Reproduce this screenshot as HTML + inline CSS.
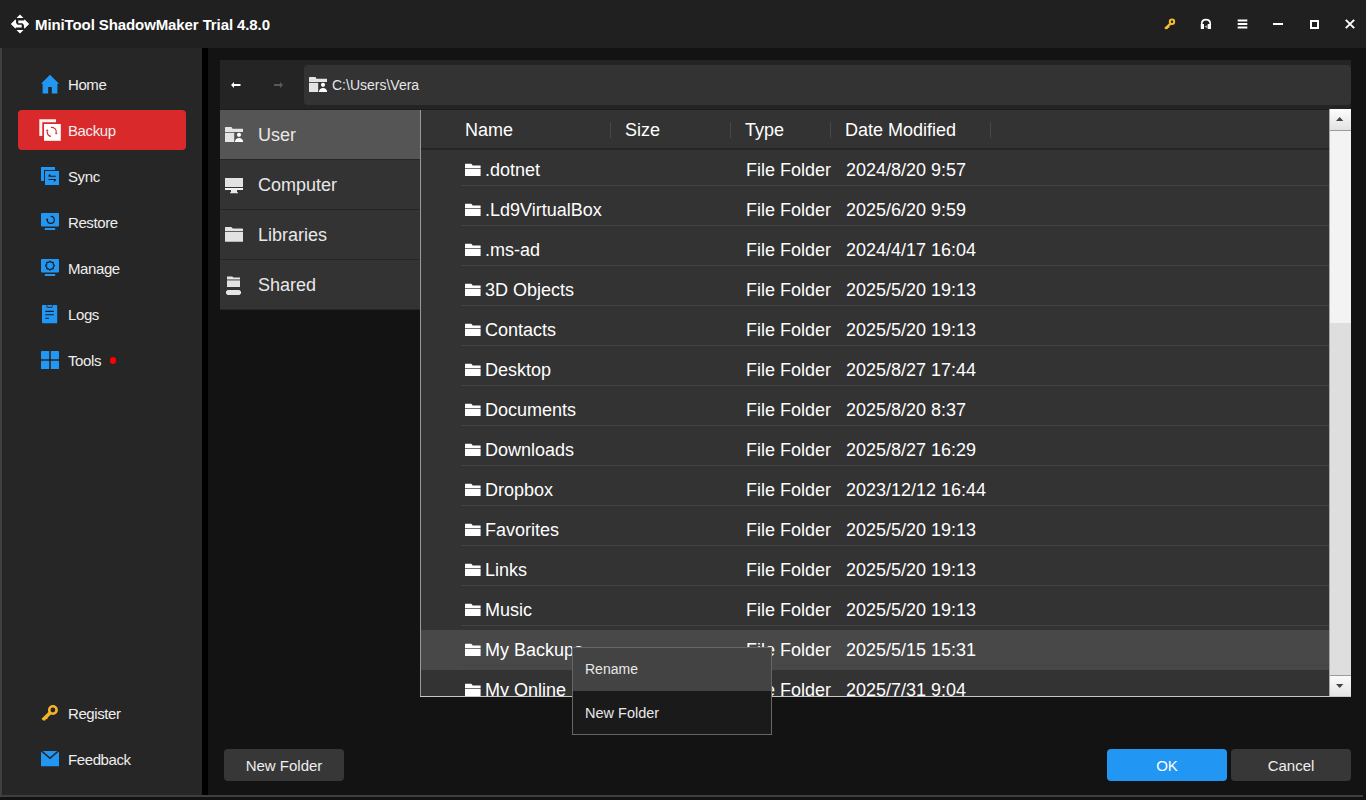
<!DOCTYPE html>
<html><head><meta charset="utf-8"><style>
*{box-sizing:border-box;margin:0;padding:0}
html,body{width:1366px;height:800px;overflow:hidden;background:#131313;font-family:"Liberation Sans",sans-serif;color:#eee}
.a{position:absolute}
svg{display:block}
#title{left:0;top:0;width:1366px;height:48px;background:#202020}
#ttxt{left:35px;top:16px;font-weight:bold;font-size:15px;line-height:18px;color:#fff;white-space:nowrap;letter-spacing:-0.1px}
#side{left:0;top:48px;width:202px;height:749px;background:#262626;border-left:2px solid #404040}
#blk{left:202px;top:48px;width:6px;height:749px;background:#000}
#botline{left:2px;top:795px;width:1361px;height:2px;background:#3e3e3e}
.nav{font-size:15px;line-height:18px;color:#eee;white-space:nowrap;left:68px;letter-spacing:-0.4px}
#navbar{left:220px;top:60px;width:1131px;height:50px;background:#242424}
#addr{left:304px;top:65px;width:1047px;height:40px;background:#333;border-radius:4px}
#addrtxt{left:332px;top:77px;font-size:14px;line-height:16px;color:#e6e6e6;white-space:nowrap}
.pl{left:220px;width:200px;height:50px;background:#333;border-bottom:1px solid #262626}
.pltxt{left:258px;font-size:18px;line-height:20px;color:#e8e8e8;white-space:nowrap}
#lc{left:421px;top:110px;width:908px;height:586px;background:#333;overflow:hidden}
#lborder{left:420px;top:110px;width:1px;height:587px;background:#9a9a9a}
#bborder{left:420px;top:696px;width:931px;height:1px;background:#c8c8c8}
.hd{top:10px;font-size:18px;line-height:20px;color:#fff;white-space:nowrap}
.hsep{top:12px;width:1px;height:16px;background:#484848}
.row{left:0;width:908px;height:40px}
.rsep{left:40px;top:35px;width:868px;height:1px;background:#444}
.rt{top:10px;font-size:18px;line-height:20px;color:#fff;white-space:nowrap}
#sb{left:1329px;top:109px;width:22px;height:587px;background:#dedede;border-left:1px solid #a8a8a8}
#menu{left:572px;top:647px;width:200px;height:88px;border:1px solid #666;background:#1a1a1a}
.btn{top:749px;width:120px;height:32px;border-radius:4px;background:#373737;font-size:15px;line-height:34px;text-align:center;color:#eee;white-space:nowrap}
</style></head>
<body>
<div id="title" class="a"></div>
<svg class="a" style="left:0;top:0" width="40" height="40">
<path d="M20 14.6L23.5 17.9H16.5Z M20 33.4L23.5 30H16.5Z" fill="#fff"/>
<path d="M10.80 23.90 L15.30 19.50 L16.00 20.00 L16.10 23.00 L17.60 24.70 L21.70 24.70 L21.70 27.60 L16.30 27.60 L15.30 28.40Z M29.20 24.10 L24.70 28.50 L24.00 28.00 L23.90 25.00 L22.40 23.30 L18.30 23.30 L18.30 20.40 L23.70 20.40 L24.70 19.60Z" fill="#fff"/>
</svg>
<div id="ttxt" class="a">MiniTool ShadowMaker Trial 4.8.0</div>

<!-- title bar right icons -->
<svg class="a" style="left:1163px;top:17px" width="14" height="13" viewBox="0 0 14 13">
<circle cx="9" cy="4.8" r="2.2" fill="none" stroke="#f5bd28" stroke-width="2"/>
<path d="M7 5.6L1.4 10.8L2.2 12.2L4.6 12L5.2 11L6.4 10.4L6.5 9L9.6 6.9Z" fill="#f5bd28"/>
</svg>
<svg class="a" style="left:1200px;top:18px" width="12" height="12" viewBox="0 0 12 12">
<path d="M1.7 6.8V5.9C1.7 3 3.6 1.6 6 1.6C8.4 1.6 10.3 3 10.3 5.9V6.8" fill="none" stroke="#fff" stroke-width="1.6"/>
<path d="M0.8 6H4V11H0.8Z M7.7 6H11V11H7.7Z" fill="#fff"/>
<path d="M4.2 8.6L7.5 7.2V10.2Z" fill="#aaa"/>
</svg>
<svg class="a" style="left:1237px;top:19px" width="11" height="10" viewBox="0 0 11 10">
<path d="M0.7 1.5H10.3M0.7 5H10.3M0.7 8.5H10.3" stroke="#fff" stroke-width="1.9"/>
</svg>
<div class="a" style="left:1273px;top:23px;width:10px;height:2px;background:#fff"></div>
<div class="a" style="left:1309.5px;top:19.5px;width:9px;height:9px;border:2px solid #fff"></div>
<svg class="a" style="left:1344.5px;top:19px" width="10" height="10" viewBox="0 0 10 10">
<path d="M0.8 0.8L9.2 9.2M9.2 0.8L0.8 9.2" stroke="#fff" stroke-width="1.9"/>
</svg>

<div id="side" class="a"></div>
<div id="blk" class="a"></div>
<div class="a" style="left:2px;top:48px;width:1px;height:747px;background:#212121"></div>
<div id="botline" class="a"></div>

<!-- sidebar -->
<div class="a" style="left:18px;top:110px;width:168px;height:40px;background:#d9292a;border-radius:4px"></div>
<svg class="a" style="left:41px;top:74px" width="19" height="20" viewBox="0 0 19 20">
<path d="M0.2 9.6L9 0.7L17.8 9.6L16.4 10V19.5H10.8V13H7.2V19.5H1.6V10Z" fill="#2196f3"/>
</svg>
<svg class="a" style="left:39px;top:119px" width="22" height="22" viewBox="0 0 22 22">
<path d="M0.3 0.3H17V3.3H3.3V17H0.3Z" fill="#f2f2f2"/>
<rect x="5" y="5" width="16.8" height="16.8" fill="#fff"/>
<path d="M11.95 8.37A4.6 4.6 0 0 1 17.28 13.7M11.95 17.43A4.6 4.6 0 0 1 8.22 12.1" fill="none" stroke="#d9292a" stroke-width="1.2"/>
<path d="M16.97 15.46L18.75 13.96L15.81 13.44Z M8.53 10.34L6.75 11.84L9.69 12.36Z" fill="#d9292a"/>
</svg>
<svg class="a" style="left:41px;top:167px" width="18" height="18" viewBox="0 0 18 18">
<path d="M0 0H14V3H3V14H0Z" fill="#2196f3"/>
<rect x="4" y="4" width="14" height="14" fill="#2196f3"/>
<path d="M7.5 9.3H14.8M7.5 12.5H14.8M7.5 9.3L9.3 7.5M14.8 12.5L13 14.3" fill="none" stroke="#1b1b1b" stroke-width="1.1"/>
</svg>
<svg class="a" style="left:41px;top:213px" width="18" height="18" viewBox="0 0 18 18">
<rect x="0" y="0" width="18" height="13.6" rx="1" fill="#2196f3"/>
<rect x="3.8" y="15" width="10.4" height="2" fill="#2196f3"/>
<path d="M9.7 3.3A3.5 3.5 0 1 1 6.3 7" fill="none" stroke="#1b1b1b" stroke-width="1.2"/>
<circle cx="6.1" cy="6.4" r="1" fill="#1b1b1b"/>
</svg>
<svg class="a" style="left:41px;top:259px" width="18" height="18" viewBox="0 0 18 18">
<rect x="0" y="0" width="18" height="13.6" rx="1" fill="#2196f3"/>
<rect x="3.8" y="15" width="10.4" height="2" fill="#2196f3"/>
<path d="M9.00 2.10 L10.34 3.37 L12.18 3.42 L12.23 5.26 L13.50 6.60 L12.23 7.94 L12.18 9.78 L10.34 9.83 L9.00 11.10 L7.66 9.83 L5.82 9.78 L5.77 7.94 L4.50 6.60 L5.77 5.26 L5.82 3.42 L7.66 3.37Z" fill="none" stroke="#1b1b1b" stroke-width="1.2" stroke-linejoin="round"/>
</svg>
<svg class="a" style="left:42px;top:305px" width="16" height="19" viewBox="0 0 16 19">
<path d="M0.6 0H4.5V1.4C4.5 2.4 5 2.8 5.8 2.8H9.4C10.2 2.8 10.6 2.4 10.6 1.4V0H14.6C15 0 15.2 0.3 15.2 0.7V17.5C15.2 17.9 15 18.2 14.6 18.2H0.6C0.2 18.2 0 17.9 0 17.5V0.7C0 0.3 0.2 0 0.6 0Z" fill="#2196f3"/>
<path d="M5.3 0H9.9V1.8H5.3Z" fill="#2196f3"/>
<path d="M3.3 6.4H11.8M3.3 9.7H11.8M3.3 13.2H7" stroke="#1b1b1b" stroke-width="1.1"/>
</svg>
<svg class="a" style="left:41px;top:351px" width="18" height="18" viewBox="0 0 18 18">
<rect x="0" y="0" width="8.2" height="8.2" rx="0.6" fill="#2196f3"/><rect x="9.8" y="0" width="8.2" height="8.2" rx="0.6" fill="#2196f3"/>
<rect x="0" y="9.8" width="8.2" height="8.2" rx="0.6" fill="#2196f3"/><rect x="9.8" y="9.8" width="8.2" height="8.2" rx="0.6" fill="#2196f3"/>
</svg>
<div class="a" style="left:109.5px;top:357px;width:6.5px;height:6.5px;border-radius:50%;background:#ff0000"></div>
<svg class="a" style="left:41px;top:704px" width="18" height="18" viewBox="0 0 18 18">
<circle cx="11.9" cy="6" r="3.7" fill="none" stroke="#f5b325" stroke-width="2.6"/>
<path d="M8.2 7.2L10.8 9.8L6.8 13.4L6.4 15L4.9 15.3L3.9 16.7L1.8 16.3L0.5 14.8Z" fill="#f5b325"/>
</svg>
<svg class="a" style="left:41px;top:751px" width="18" height="16" viewBox="0 0 18 16">
<path d="M0 0.5L9 8.3L18 0.5V15.3H0Z" fill="#2196f3"/>
<path d="M1.8 0H16.2L9 6.2Z" fill="#2196f3"/>
</svg>
<div class="a nav" style="top:76px">Home</div>
<div class="a nav" style="top:122px">Backup</div>
<div class="a nav" style="top:168px">Sync</div>
<div class="a nav" style="top:214px">Restore</div>
<div class="a nav" style="top:260px">Manage</div>
<div class="a nav" style="top:306px">Logs</div>
<div class="a nav" style="top:352px">Tools</div>
<div class="a nav" style="top:705px">Register</div>
<div class="a nav" style="top:751px">Feedback</div>

<!-- nav bar -->
<div id="navbar" class="a"></div>
<div class="a" style="left:220px;top:109px;width:1131px;height:1px;background:#1d1d1d"></div>
<svg class="a" style="left:231px;top:82px" width="10" height="6" viewBox="0 0 10 6">
<path d="M0 3L3 0V2H9.5V4H3V6Z" fill="#fff"/>
</svg>
<svg class="a" style="left:274px;top:82px" width="10" height="6" viewBox="0 0 10 6">
<path d="M9 3L6 0V2H0V4H6V6Z" fill="#5a5a5a"/>
</svg>
<div id="addr" class="a"></div>
<svg class="a" style="left:309px;top:77px" width="19" height="16" viewBox="0 0 19 16"><path d="M0 0.5C0 0.2 0.2 0 0.5 0H6.5L7.5 1.7H18V5H0Z" fill="#e4e4e4"/><path d="M0 5.8H9.2V15H0Z" fill="#e4e4e4"/><circle cx="14" cy="7.8" r="2.1" fill="#fff"/><path d="M9.9 15C10.2 12.2 11.8 11 14 11C16.2 11 17.9 12.2 18.2 15Z" fill="#fff"/></svg>
<div id="addrtxt" class="a">C:\Users\Vera</div>

<!-- places -->
<div class="a pl" style="top:110px;background:#555"></div>
<div class="a pl" style="top:160px"></div>
<div class="a pl" style="top:210px"></div>
<div class="a pl" style="top:260px"></div>
<svg class="a" style="left:225px;top:127px" width="19" height="16" viewBox="0 0 19 16"><path d="M0 0.5C0 0.2 0.2 0 0.5 0H6.5L7.5 1.7H18V5H0Z" fill="#e4e4e4"/><path d="M0 5.8H9.2V15H0Z" fill="#e4e4e4"/><circle cx="14" cy="7.8" r="2.1" fill="#fff"/><path d="M9.9 15C10.2 12.2 11.8 11 14 11C16.2 11 17.9 12.2 18.2 15Z" fill="#fff"/></svg>
<svg class="a" style="left:225px;top:178px" width="18" height="16" viewBox="0 0 18 16">
<rect x="0" y="0" width="18" height="9" fill="#e2e2e2"/>
<rect x="0" y="10" width="18" height="2" fill="#f2f2f2"/>
<path d="M6 12H12V14.3H13V15.2H5V14.3H6Z" fill="#e8e8e8"/>
</svg>
<svg class="a" style="left:225px;top:227px" width="18" height="15" viewBox="0 0 18 15">
<path d="M0 0.6C0 0.2 0.2 0 0.6 0H6.3L7.8 1.6H17.4C17.8 1.6 18 1.8 18 2.2V4H0Z" fill="#e2e2e2"/>
<path d="M0 4.8H18V14.2C18 14.6 17.8 14.8 17.4 14.8H0.6C0.2 14.8 0 14.6 0 14.2Z" fill="#e2e2e2"/>
</svg>
<svg class="a" style="left:226px;top:276px" width="16" height="19" viewBox="0 0 16 19">
<path d="M1 0.4H6.2L7.4 1.6H14V3.3H1Z" fill="#e6e6e6"/>
<path d="M1 3.3H14V4.6H1Z" fill="#9a9a9a"/>
<path d="M1 4.6H14V11H1Z" fill="#e2e2e2"/>
<path d="M0 15.4L1.6 14H13.4L15 15.4V17.6L13.4 19H1.6L0 17.6Z" fill="#e6e6e6"/>
</svg>
<div class="a pltxt" style="top:125px">User</div>
<div class="a pltxt" style="top:175px">Computer</div>
<div class="a pltxt" style="top:225px">Libraries</div>
<div class="a pltxt" style="top:275px">Shared</div>

<!-- list -->
<div id="lc" class="a">
<div class="a" style="left:0;top:38px;width:908px;height:2px;background:#262626"></div>
<div class="a hd" style="left:44px">Name</div>
<div class="a hsep" style="left:189px"></div>
<div class="a hd" style="left:204px">Size</div>
<div class="a hsep" style="left:309px"></div>
<div class="a hd" style="left:324px">Type</div>
<div class="a hsep" style="left:409px"></div>
<div class="a hd" style="left:424px">Date Modified</div>
<div class="a hsep" style="left:569px"></div>
<div class="a row" style="top:40px"><div class="a rsep"></div><svg class="a" style="left:44px;top:13px" width="16" height="13" viewBox="0 0 16 13"><path d="M0 1.2Q0 0.7 0.6 0.7H6.2L7.8 2.4H15.6V5H0Z" fill="#fff"/><path d="M0 5H15.6V5.6H0Z" fill="#999"/><path d="M0 6H15.6V13H0Z" fill="#fff"/></svg><div class="a rt" style="left:64px">.dotnet</div><div class="a rt" style="left:325px">File Folder</div><div class="a rt" style="left:425px">2024/8/20 9:57</div></div><div class="a row" style="top:80px"><div class="a rsep"></div><svg class="a" style="left:44px;top:13px" width="16" height="13" viewBox="0 0 16 13"><path d="M0 1.2Q0 0.7 0.6 0.7H6.2L7.8 2.4H15.6V5H0Z" fill="#fff"/><path d="M0 5H15.6V5.6H0Z" fill="#999"/><path d="M0 6H15.6V13H0Z" fill="#fff"/></svg><div class="a rt" style="left:64px">.Ld9VirtualBox</div><div class="a rt" style="left:325px">File Folder</div><div class="a rt" style="left:425px">2025/6/20 9:59</div></div><div class="a row" style="top:120px"><div class="a rsep"></div><svg class="a" style="left:44px;top:13px" width="16" height="13" viewBox="0 0 16 13"><path d="M0 1.2Q0 0.7 0.6 0.7H6.2L7.8 2.4H15.6V5H0Z" fill="#fff"/><path d="M0 5H15.6V5.6H0Z" fill="#999"/><path d="M0 6H15.6V13H0Z" fill="#fff"/></svg><div class="a rt" style="left:64px">.ms-ad</div><div class="a rt" style="left:325px">File Folder</div><div class="a rt" style="left:425px">2024/4/17 16:04</div></div><div class="a row" style="top:160px"><div class="a rsep"></div><svg class="a" style="left:44px;top:13px" width="16" height="13" viewBox="0 0 16 13"><path d="M0 1.2Q0 0.7 0.6 0.7H6.2L7.8 2.4H15.6V5H0Z" fill="#fff"/><path d="M0 5H15.6V5.6H0Z" fill="#999"/><path d="M0 6H15.6V13H0Z" fill="#fff"/></svg><div class="a rt" style="left:64px">3D Objects</div><div class="a rt" style="left:325px">File Folder</div><div class="a rt" style="left:425px">2025/5/20 19:13</div></div><div class="a row" style="top:200px"><div class="a rsep"></div><svg class="a" style="left:44px;top:13px" width="16" height="13" viewBox="0 0 16 13"><path d="M0 1.2Q0 0.7 0.6 0.7H6.2L7.8 2.4H15.6V5H0Z" fill="#fff"/><path d="M0 5H15.6V5.6H0Z" fill="#999"/><path d="M0 6H15.6V13H0Z" fill="#fff"/></svg><div class="a rt" style="left:64px">Contacts</div><div class="a rt" style="left:325px">File Folder</div><div class="a rt" style="left:425px">2025/5/20 19:13</div></div><div class="a row" style="top:240px"><div class="a rsep"></div><svg class="a" style="left:44px;top:13px" width="16" height="13" viewBox="0 0 16 13"><path d="M0 1.2Q0 0.7 0.6 0.7H6.2L7.8 2.4H15.6V5H0Z" fill="#fff"/><path d="M0 5H15.6V5.6H0Z" fill="#999"/><path d="M0 6H15.6V13H0Z" fill="#fff"/></svg><div class="a rt" style="left:64px">Desktop</div><div class="a rt" style="left:325px">File Folder</div><div class="a rt" style="left:425px">2025/8/27 17:44</div></div><div class="a row" style="top:280px"><div class="a rsep"></div><svg class="a" style="left:44px;top:13px" width="16" height="13" viewBox="0 0 16 13"><path d="M0 1.2Q0 0.7 0.6 0.7H6.2L7.8 2.4H15.6V5H0Z" fill="#fff"/><path d="M0 5H15.6V5.6H0Z" fill="#999"/><path d="M0 6H15.6V13H0Z" fill="#fff"/></svg><div class="a rt" style="left:64px">Documents</div><div class="a rt" style="left:325px">File Folder</div><div class="a rt" style="left:425px">2025/8/20 8:37</div></div><div class="a row" style="top:320px"><div class="a rsep"></div><svg class="a" style="left:44px;top:13px" width="16" height="13" viewBox="0 0 16 13"><path d="M0 1.2Q0 0.7 0.6 0.7H6.2L7.8 2.4H15.6V5H0Z" fill="#fff"/><path d="M0 5H15.6V5.6H0Z" fill="#999"/><path d="M0 6H15.6V13H0Z" fill="#fff"/></svg><div class="a rt" style="left:64px">Downloads</div><div class="a rt" style="left:325px">File Folder</div><div class="a rt" style="left:425px">2025/8/27 16:29</div></div><div class="a row" style="top:360px"><div class="a rsep"></div><svg class="a" style="left:44px;top:13px" width="16" height="13" viewBox="0 0 16 13"><path d="M0 1.2Q0 0.7 0.6 0.7H6.2L7.8 2.4H15.6V5H0Z" fill="#fff"/><path d="M0 5H15.6V5.6H0Z" fill="#999"/><path d="M0 6H15.6V13H0Z" fill="#fff"/></svg><div class="a rt" style="left:64px">Dropbox</div><div class="a rt" style="left:325px">File Folder</div><div class="a rt" style="left:425px">2023/12/12 16:44</div></div><div class="a row" style="top:400px"><div class="a rsep"></div><svg class="a" style="left:44px;top:13px" width="16" height="13" viewBox="0 0 16 13"><path d="M0 1.2Q0 0.7 0.6 0.7H6.2L7.8 2.4H15.6V5H0Z" fill="#fff"/><path d="M0 5H15.6V5.6H0Z" fill="#999"/><path d="M0 6H15.6V13H0Z" fill="#fff"/></svg><div class="a rt" style="left:64px">Favorites</div><div class="a rt" style="left:325px">File Folder</div><div class="a rt" style="left:425px">2025/5/20 19:13</div></div><div class="a row" style="top:440px"><div class="a rsep"></div><svg class="a" style="left:44px;top:13px" width="16" height="13" viewBox="0 0 16 13"><path d="M0 1.2Q0 0.7 0.6 0.7H6.2L7.8 2.4H15.6V5H0Z" fill="#fff"/><path d="M0 5H15.6V5.6H0Z" fill="#999"/><path d="M0 6H15.6V13H0Z" fill="#fff"/></svg><div class="a rt" style="left:64px">Links</div><div class="a rt" style="left:325px">File Folder</div><div class="a rt" style="left:425px">2025/5/20 19:13</div></div><div class="a row" style="top:480px"><div class="a rsep"></div><svg class="a" style="left:44px;top:13px" width="16" height="13" viewBox="0 0 16 13"><path d="M0 1.2Q0 0.7 0.6 0.7H6.2L7.8 2.4H15.6V5H0Z" fill="#fff"/><path d="M0 5H15.6V5.6H0Z" fill="#999"/><path d="M0 6H15.6V13H0Z" fill="#fff"/></svg><div class="a rt" style="left:64px">Music</div><div class="a rt" style="left:325px">File Folder</div><div class="a rt" style="left:425px">2025/5/20 19:13</div></div><div class="a row" style="top:520px;background:#484848"><div class="a rsep"></div><svg class="a" style="left:44px;top:13px" width="16" height="13" viewBox="0 0 16 13"><path d="M0 1.2Q0 0.7 0.6 0.7H6.2L7.8 2.4H15.6V5H0Z" fill="#fff"/><path d="M0 5H15.6V5.6H0Z" fill="#999"/><path d="M0 6H15.6V13H0Z" fill="#fff"/></svg><div class="a rt" style="left:64px">My Backups</div><div class="a rt" style="left:325px">File Folder</div><div class="a rt" style="left:425px">2025/5/15 15:31</div></div><div class="a row" style="top:560px"><div class="a rsep"></div><svg class="a" style="left:44px;top:13px" width="16" height="13" viewBox="0 0 16 13"><path d="M0 1.2Q0 0.7 0.6 0.7H6.2L7.8 2.4H15.6V5H0Z" fill="#fff"/><path d="M0 5H15.6V5.6H0Z" fill="#999"/><path d="M0 6H15.6V13H0Z" fill="#fff"/></svg><div class="a rt" style="left:64px">My Online</div><div class="a rt" style="left:325px">File Folder</div><div class="a rt" style="left:425px">2025/7/31 9:04</div></div>
</div>
<div id="lborder" class="a"></div>
<div id="sb" class="a">
<div class="a" style="left:0;top:0;width:21px;height:22px;background:linear-gradient(#fdfdfd,#e2e2e2);border-bottom:1px solid #9a9a9a"></div>
<svg class="a" style="left:6px;top:8px" width="8" height="4" viewBox="0 0 8 4"><path d="M3.7 0L7.4 4H0Z" fill="#444"/></svg>
<div class="a" style="left:0;top:22px;width:21px;height:192px;background:#f3f3f3"></div>
<div class="a" style="left:0;top:566px;width:21px;height:21px;background:linear-gradient(#fafafa,#e4e4e4);border-top:1px solid #9a9a9a"></div>
<svg class="a" style="left:6px;top:575px" width="8" height="4" viewBox="0 0 8 4"><path d="M3.7 4L7.4 0H0Z" fill="#444"/></svg>
</div>
<div id="bborder" class="a"></div>

<!-- buttons -->
<div class="a btn" style="left:224px">New Folder</div>
<div class="a btn" style="left:1107px;background:#2196f3;color:#fff">OK</div>
<div class="a btn" style="left:1231px">Cancel</div>

<div id="menu" class="a">
<div class="a" style="left:0;top:0;width:198px;height:43px;background:#434343"></div>
<div class="a" style="left:12px;top:13px;font-size:14px;line-height:16px;color:#e8e8e8">Rename</div>
<div class="a" style="left:12px;top:57px;font-size:14.5px;line-height:16px;color:#e8e8e8;white-space:nowrap">New Folder</div>
</div>
</body></html>
